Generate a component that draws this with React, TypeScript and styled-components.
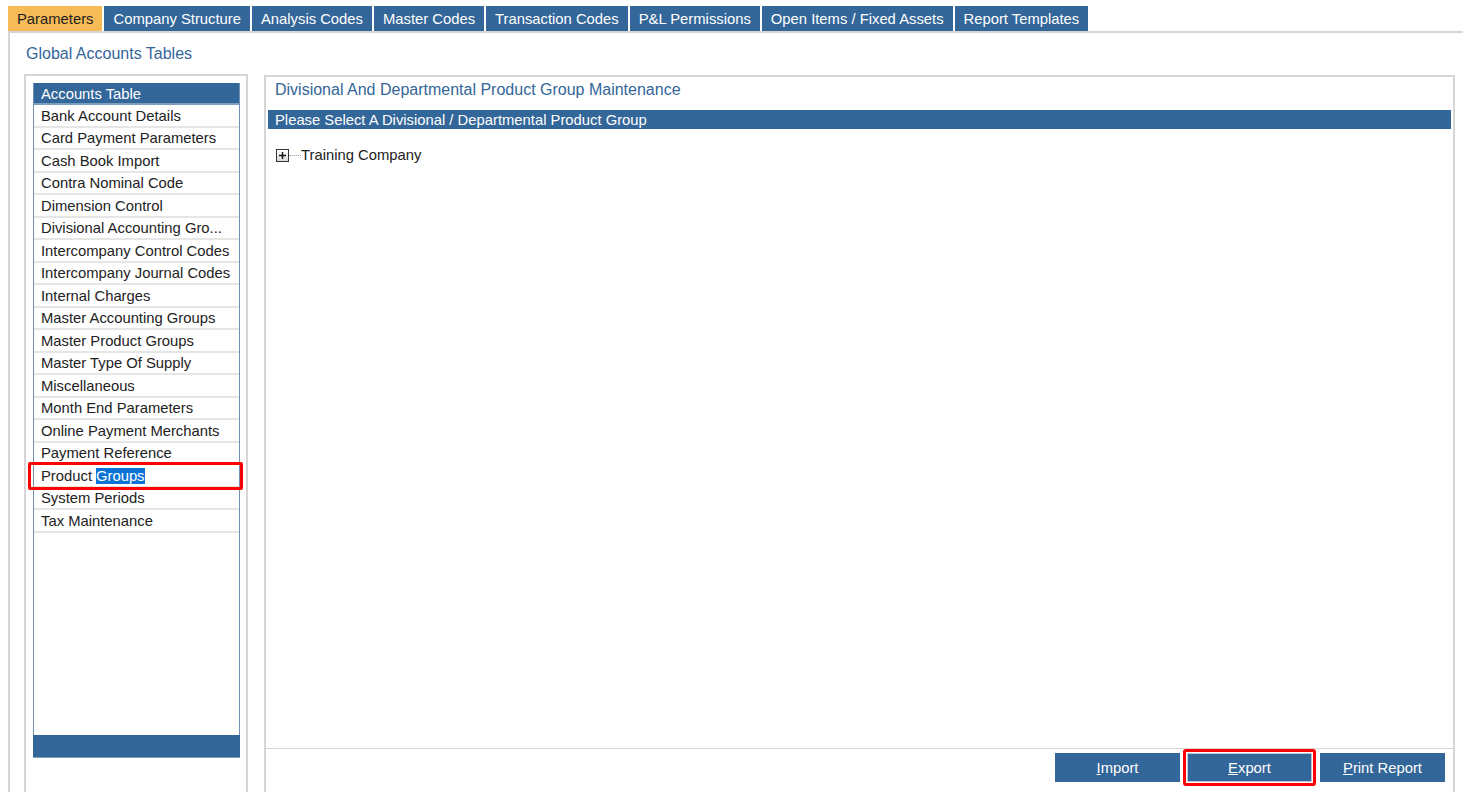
import styled, { createGlobalStyle } from 'styled-components';

const BLUE = '#336699';

const TABS = [
  'Parameters',
  'Company Structure',
  'Analysis Codes',
  'Master Codes',
  'Transaction Codes',
  'P&L Permissions',
  'Open Items / Fixed Assets',
  'Report Templates'
];

const TABLES = [
  'Bank Account Details',
  'Card Payment Parameters',
  'Cash Book Import',
  'Contra Nominal Code',
  'Dimension Control',
  'Divisional Accounting Gro...',
  'Intercompany Control Codes',
  'Intercompany Journal Codes',
  'Internal Charges',
  'Master Accounting Groups',
  'Master Product Groups',
  'Master Type Of Supply',
  'Miscellaneous',
  'Month End Parameters',
  'Online Payment Merchants',
  'Payment Reference',
  'Product Groups',
  'System Periods',
  'Tax Maintenance'
];

const BUTTONS = [
  { key: 'I', rest: 'mport' },
  { key: 'E', rest: 'xport', marked: true },
  { key: 'P', rest: 'rint Report' }
];

const GlobalStyle = createGlobalStyle`
  * { box-sizing: border-box; }
  html, body {
    margin: 0;
    background: #fff;
    overflow: hidden;
  }
  body {
    font-family: Tahoma, "Liberation Sans", Arial, sans-serif;
    font-size: 14.8px;
    color: #222;
  }
`;

export default function App() {
  return (
    <>
      <GlobalStyle />
      <Page>
        <TabBar>
          {TABS.map((t, i) => (
            <Tab key={t} $active={i === 0}>{t}</Tab>
          ))}
          <TabFill />
        </TabBar>
        <Body>
          <PageTitle>Global Accounts Tables</PageTitle>
          <Columns>
            <LeftPanel>
              <TableList>
                <ListHeader>Accounts Table</ListHeader>
                <Rows>
                  {TABLES.map((name) => (
                    <Row key={name}>
                      {name === 'Product Groups' ? (
                        <>
                          Product <Selected>Groups</Selected>
                          <Highlight />
                        </>
                      ) : (
                        name
                      )}
                    </Row>
                  ))}
                </Rows>
                <ListFooter />
              </TableList>
            </LeftPanel>
            <RightPanel>
              <PanelTitle>Divisional And Departmental Product Group Maintenance</PanelTitle>
              <SectionBar>Please Select A Divisional / Departmental Product Group</SectionBar>
              <Tree>
                <TreeNode>
                  <Expander>
                    <svg width="7" height="7" viewBox="0 0 7 7">
                      <path d="M0 3.5h7M3.5 0v7" stroke="#111" strokeWidth="1.4" />
                    </svg>
                  </Expander>
                  <Connector />
                  <NodeLabel>Training Company</NodeLabel>
                </TreeNode>
              </Tree>
              <Footer>
                {BUTTONS.map((b) => (
                  <ButtonWrap key={b.key} $marked={!!b.marked}>
                    <ActionButton $focused={!!b.marked}>
                      <u>{b.key}</u>
                      {b.rest}
                    </ActionButton>
                  </ButtonWrap>
                ))}
              </Footer>
            </RightPanel>
          </Columns>
        </Body>
      </Page>
    </>
  );
}

const Page = styled.div`
  padding: 6px 0 0 8px;
  height: 100vh;
  display: flex;
  flex-direction: column;
`;

const TabBar = styled.div`
  display: flex;
  gap: 2px;
  height: 25px;
`;

const Tab = styled.div<{ $active: boolean }>`
  height: 25px;
  padding: 0 9px;
  display: flex;
  align-items: center;
  white-space: nowrap;
  background: ${({ $active }) => ($active ? '#f6bb57' : BLUE)};
  color: ${({ $active }) => ($active ? '#1d1d1d' : '#fff')};
`;

const TabFill = styled.div`
  flex: 1;
`;

const Body = styled.div`
  flex: 1;
  border-top: 2px solid #d6d6d6;
  border-left: 2px solid #d6d6d6;
  padding: 10px 8px 0 14px;
  display: flex;
  flex-direction: column;
`;

const PageTitle = styled.div`
  color: ${BLUE};
  font-size: 16px;
  line-height: 22px;
  margin-left: 2px;
  margin-bottom: 9px;
`;

const Columns = styled.div`
  flex: 1;
  display: flex;
  gap: 16px;
  margin-bottom: -20px;
`;

const LeftPanel = styled.div`
  width: 224px;
  flex-shrink: 0;
  border: 2px solid #d6d6d6;
  padding: 7px 6px 0 7px;
`;

const TableList = styled.div`
  height: 675px;
  display: flex;
  flex-direction: column;
  border-left: 1px solid #6f90b3;
  border-right: 1px solid #6f90b3;
`;

const ListHeader = styled.div`
  height: 22px;
  background: ${BLUE};
  color: #fff;
  padding: 1px 0 0 7px;
  display: flex;
  align-items: center;
  border-bottom: 2px solid #7f9fbf;
`;

const Rows = styled.div`
  flex: 1;
`;

const Row = styled.div`
  position: relative;
  height: 22.5px;
  padding: 1px 0 0 7px;
  display: flex;
  align-items: center;
  border-bottom: 2px solid #e6e6e6;
  white-space: nowrap;
`;

const Selected = styled.span`
  background: #0a74d6;
  color: #fff;
  margin-left: 4px;
`;

const Highlight = styled.span`
  position: absolute;
  left: -6px;
  right: -4px;
  top: -3px;
  bottom: -4px;
  border: 3px solid #ff0000;
  border-radius: 2px;
  pointer-events: none;
`;

const ListFooter = styled.div`
  height: 23px;
  background: ${BLUE};
  border-bottom: 1px solid #7f9fbf;
  margin: 0 -1px;
`;

const RightPanel = styled.div`
  flex: 1;
  margin-top: 1px;
  border: 2px solid #d6d6d6;
  display: flex;
  flex-direction: column;
  padding: 0 2px;
`;

const PanelTitle = styled.div`
  color: ${BLUE};
  font-size: 16px;
  line-height: 22px;
  padding: 2px 0 0 7px;
  height: 33px;
`;

const SectionBar = styled.div`
  height: 19px;
  background: ${BLUE};
  color: #fff;
  padding-left: 7px;
  display: flex;
  align-items: center;
`;

const Tree = styled.div`
  flex: 1;
  padding: 17px 0 0 8px;
`;

const TreeNode = styled.div`
  display: flex;
  align-items: center;
  height: 18px;
`;

const Expander = styled.span`
  width: 13px;
  height: 13px;
  border: 1px solid #333;
  background: linear-gradient(#ffffff, #d8d8d8);
  display: grid;
  place-items: center;
`;

const Connector = styled.span`
  width: 12px;
  border-top: 1px dotted #9a9a9a;
`;

const NodeLabel = styled.span`
  color: #222;
`;

const Footer = styled.div`
  border-top: 1px solid #d6d6d6;
  margin: 0 -2px;
  height: 62px;
  display: flex;
  justify-content: flex-end;
  align-items: flex-start;
  padding: 0 4px 0 0;
`;

const ButtonWrap = styled.div<{ $marked: boolean }>`
  padding: 1px;
  border: 3px solid ${({ $marked }) => ($marked ? '#ff0000' : 'transparent')};
  border-radius: 3px;
  &:first-child {
    margin-right: -1px;
  }
`;

const ActionButton = styled.div<{ $focused: boolean }>`
  width: 125px;
  height: 29px;
  background: ${BLUE};
  color: #fff;
  display: flex;
  align-items: center;
  justify-content: center;
  box-shadow: ${({ $focused }) => ($focused ? 'inset 0 0 0 1px #b9c9da' : 'none')};
`;
